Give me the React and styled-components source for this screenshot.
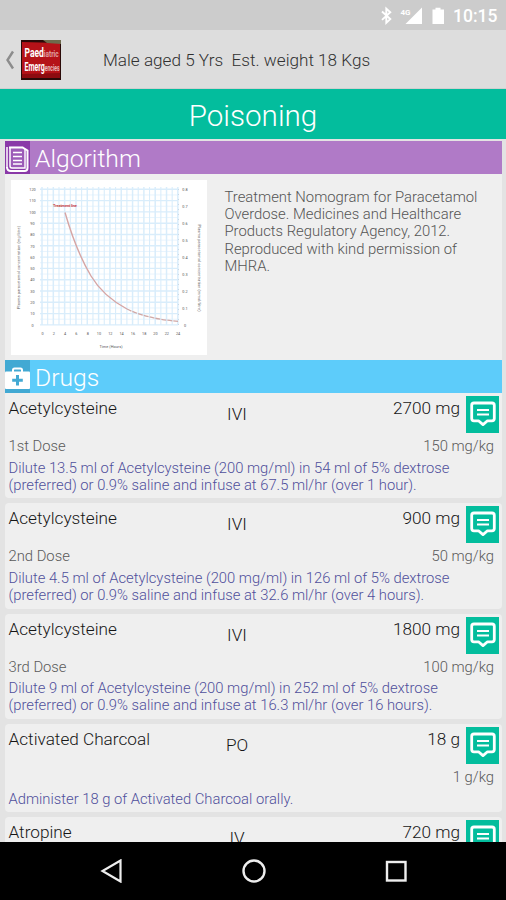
import React from 'react';
import styled, { createGlobalStyle } from 'styled-components';

const GlobalStyle = createGlobalStyle`
  * { box-sizing: border-box; }
  html, body { margin: 0; padding: 0; overflow: hidden; }
  body { font-family: Roboto, sans-serif; }
  svg { display: block; flex: none; }
`;

const Screen = styled.div`
  width: 506px;
  height: 900px;
  display: flex;
  flex-direction: column;
  overflow: hidden;
  background: #e3e3e3;
`;

const StatusBar = styled.div`
  height: 30px;
  flex: none;
  display: flex;
  align-items: center;
  padding-left: 380px;
  padding-top: 2px;
  background: #cccccc;
  color: #fff;
`;

const Clock = styled.span`
  margin-left: 8px;
  font-size: 17.5px;
  font-weight: 500;
`;

const ActionBar = styled.div`
  height: 59px;
  flex: none;
  display: flex;
  align-items: center;
  padding: 2px 0 0 5px;
  background: #dddddd;
  border-bottom: 1px solid #cfcfcf;
`;

const Patient = styled.div`
  margin-left: 42px;
  font-size: 17.15px;
  font-weight: 350;
  color: #303030;
  white-space: pre;
`;

const Banner = styled.div`
  height: 50px;
  flex: none;
  line-height: 54px;
  text-align: center;
  background: #03bd9d;
  color: #fff;
  font-size: 29.6px;
  font-weight: 300;
`;

const Content = styled.div`
  flex: 1;
  min-height: 0;
  overflow: hidden;
  padding: 2px 4px 0 5px;
`;

const SectionHeader = styled.div`
  height: 33px;
  display: flex;
  align-items: center;
  background: ${(props) => props.color};
`;

const SectionTitle = styled.span`
  margin-left: 5px;
  padding-top: 3px;
  line-height: 32px;
  color: #fff;
  font-size: 24.7px;
  font-weight: 300;
`;

const AlgorithmCard = styled.div`
  height: 186px;
  display: flex;
  padding: 6px 0 0 6px;
  background: #efefef;
`;

const AlgorithmText = styled.p`
  width: 266px;
  margin: 9px 0 0 17.5px;
  font-size: 14.82px;
  font-weight: 300;
  line-height: 17.2px;
  color: #555;
`;

const DrugList = styled.div`
  display: flex;
  flex-direction: column;
  gap: 5px;
`;

const DrugCard = styled.div`
  height: ${(props) => props.height}px;
  flex: none;
  padding: 3px 3px 0 3.5px;
  background: #efefef;
  border-radius: ${(props) => (props.first ? '0 0 4px 4px' : '4px')};
`;

const DrugHead = styled.div`
  height: 38px;
  display: grid;
  grid-template-columns: 207.5px 42px 1fr 33px;
  color: #161616;
  font-size: 17.2px;
  font-weight: 350;
  line-height: 24px;
`;

const Route = styled.span`
  padding-top: 6px;
  text-align: center;
`;

const Amount = styled.span`
  padding-right: 6px;
  text-align: right;
`;

const NoteButton = styled.button`
  width: 33px;
  height: 37px;
  padding: 0;
  border: 0;
  background: #03bd9d;
`;

const DoseRow = styled.div`
  height: 25.5px;
  display: flex;
  justify-content: space-between;
  padding-right: 5px;
  font-size: 14.8px;
  font-weight: 300;
  line-height: 25px;
  color: #5a5a5a;
`;

const Note = styled.div`
  font-size: 14.78px;
  font-weight: 300;
  line-height: 17.2px;
  color: #50509c;
  white-space: pre-line;
`;

const NavBar = styled.div`
  height: 58px;
  flex: none;
  display: flex;
  justify-content: space-between;
  align-items: center;
  padding: 0 98px 0 100px;
  background: #000;
`;

const drugs = [
  {
    name: 'Acetylcysteine', route: 'IVI', amount: '2700 mg', dose: '1st Dose', perKg: '150 mg/kg', height: 105.4,
    note: 'Dilute 13.5 ml of Acetylcysteine (200 mg/ml) in 54 ml of 5% dextrose\n(preferred) or 0.9% saline and infuse at 67.5 ml/hr (over 1 hour).',
  },
  {
    name: 'Acetylcysteine', route: 'IVI', amount: '900 mg', dose: '2nd Dose', perKg: '50 mg/kg', height: 105.4,
    note: 'Dilute 4.5 ml of Acetylcysteine (200 mg/ml) in 126 ml of 5% dextrose\n(preferred) or 0.9% saline and infuse at 32.6 ml/hr (over 4 hours).',
  },
  {
    name: 'Acetylcysteine', route: 'IVI', amount: '1800 mg', dose: '3rd Dose', perKg: '100 mg/kg', height: 105.4,
    note: 'Dilute 9 ml of Acetylcysteine (200 mg/ml) in 252 ml of 5% dextrose\n(preferred) or 0.9% saline and infuse at 16.3 ml/hr (over 16 hours).',
  },
  {
    name: 'Activated Charcoal', route: 'PO', amount: '18 g', dose: '', perKg: '1 g/kg', height: 88,
    note: 'Administer 18 g of Activated Charcoal orally.',
  },
  {
    name: 'Atropine', route: 'IV', amount: '720 mg', dose: '', perKg: '', height: 88, note: '',
  },
];

const range = (n) => Array.from({ length: n }, (_, i) => i);

const StatusIcons = () => (
  <svg width="65" height="20" viewBox="0 0 65 20">
    <path d="M2 5.5l8.3 7.6-4 3.7V2.6l4 3.7L2 13.9" fill="none" stroke="#fff" strokeWidth="1.9" />
    <path d="M42 1.500V18H25.500l8-8z" fill="#fff" />
    <text x="20.500" y="8.500" fontSize="8" fontWeight="700" fill="#fff">4G</text>
    <path d="M55.500 3.500v-1.800h5v1.800h3.500V18H52.500V3.500z" fill="#fff" />
  </svg>
);

const Logo = () => (
  <svg width="40" height="40" viewBox="0 0 40 40">
    <rect width="40" height="40" fill="#2a0a08" />
    <path d="M1 2l38 1v35H1z" fill="#b51218" />
    <path d="M22 0h18v4L26 3z" fill="#6e6a4c" />
    <path d="M1 34l38-1v5H1z" fill="#8d0b10" />
    <g fill="#fff" fontWeight="700" fontSize="12.500">
      <text transform="translate(3.500 16.500) scale(0.68 1)">
        Paed<tspan fontSize="9.500" fillOpacity="0.6">iatric</tspan>
      </text>
      <text transform="translate(3.500 31) scale(0.56 1)">
        Emerg<tspan fontSize="9" fillOpacity="0.7">encies</tspan>
      </text>
    </g>
  </svg>
);

const DocumentIcon = () => (
  <svg width="25" height="33" viewBox="0 0 25 33">
    <rect width="25" height="33" fill="#8a39a8" />
    <path d="M5 5.500h14v22H5z" fill="#9c5bb8" />
    <path d="M4 6.500h13.500l5 3V27q0 3-3 3H6q-4 0-4-4" fill="none" stroke="#fff" strokeWidth="2" />
    <path d="M5 6v19q0 2 2 2h13V8" fill="none" stroke="#fff" strokeWidth="1.500" />
    <path d="M2 6v21" stroke="#fff" strokeWidth="1.500" />
    <path d="M8 11.500h9M8 15.500h9M8 19.500h9M8 23h9" stroke="#fff" strokeWidth="1.600" />
  </svg>
);

const MedkitIcon = () => (
  <svg width="25" height="33" viewBox="0 0 25 33">
    <rect width="25" height="33" fill="#42a9d3" />
    <path d="M8 12V10q0-1.500 1.500-1.500h6Q17 8.500 17 10v2" fill="none" stroke="#fff" strokeWidth="2" />
    <rect y="11.500" width="25" height="17.500" rx="1" fill="#fff" />
    <path d="M12.500 15v10.500M7.200 20.200h10.600" stroke="#42a9d3" strokeWidth="3" />
  </svg>
);

const CommentIcon = () => (
  <svg width="33" height="37" viewBox="0 0 33 37">
    <path d="M8 7h18q2.300 0 2.300 2.300v13.200q0 2.300-2.300 2.300h-4.500L17 28.600l-4.500-3.800H8q-2.300 0-2.300-2.300V9.300Q5.700 7 8 7z" fill="none" stroke="#fff" strokeWidth="2.800" strokeLinejoin="round" />
    <path d="M11 14h12M11 18.500h12" stroke="#fff" strokeWidth="2" />
  </svg>
);

const Nomogram = () => (
  <svg width="196" height="175" viewBox="0 0 196 175">
    <rect width="196" height="175" fill="#fff" />
    {range(25).map((i) => (
      <path key={i} d={`M${31 + i * 5.66} 7v138`} stroke="#d9edfb" strokeWidth={i % 2 ? 1.1 : 1.5} />
    ))}
    {range(25).map((i) => (
      <path key={i} d={`M29 ${9.3 + i * 5.65}h138`} stroke="#d9edfb" strokeWidth={i % 2 ? 0.6 : 1.4} />
    ))}
    <path d="M54 32.500C62 60 71 81 80 96S101 121 116 129" fill="none" stroke="#d6a5a4" strokeWidth="1.400" />
    <path d="M116 129C130 136 149 140 167 141.300" fill="none" stroke="#d0a8a6" strokeWidth="1.300" strokeDasharray="5 1" />
    <text x="42" y="26.500" fontSize="4" fontWeight="700" fill="#c64240" textLength="24">Treatment line</text>
    <g fontSize="3.800" fill="#555" textAnchor="middle">
      {range(13).map((i) => (
        <text key={i} x={31.5 + i * 11.3} y="155">{i * 2}</text>
      ))}
      {range(13).map((i) => (
        <text key={i} x="21.500" y={11 + i * 11.3}>{120 - i * 10}</text>
      ))}
      {range(9).map((i) => (
        <text key={i} x="174" y={11 + i * 16.95}>{i === 8 ? '0' : `0.${8 - i}`}</text>
      ))}
      <text x="100" y="167.500" textLength="23">Time (Hours)</text>
      <text transform="translate(9 87.500) rotate(-90)" textLength="83">Plasma paracetamol concentration (mg/litre)</text>
      <text transform="translate(186.500 88) rotate(90)" textLength="87">Plasma paracetamol concentration (mmol/litre)</text>
    </g>
    <path d="M167.500 9v136" stroke="#bcd" strokeWidth="0.700" strokeDasharray="1 4" />
  </svg>
);

const App = () => (
  <Screen>
    <GlobalStyle />
    <StatusBar>
      <StatusIcons />
      <Clock>10:15</Clock>
    </StatusBar>
    <ActionBar>
      <svg width="16" height="20" viewBox="0 0 16 20">
        <path d="M8 1.500L2.500 10 8 18.500" fill="none" stroke="#8c8c8c" strokeWidth="2.400" />
      </svg>
      <Logo />
      <Patient>Male aged 5 Yrs  Est. weight 18 Kgs</Patient>
    </ActionBar>
    <Banner>Poisoning</Banner>
    <Content>
      <SectionHeader color="#b07ac7">
        <DocumentIcon />
        <SectionTitle>Algorithm</SectionTitle>
      </SectionHeader>
      <AlgorithmCard>
        <Nomogram />
        <AlgorithmText>
          Treatment Nomogram for Paracetamol Overdose. Medicines and Healthcare Products Regulatory Agency, 2012. Reproduced with kind permission of MHRA.
        </AlgorithmText>
      </AlgorithmCard>
      <SectionHeader color="#5dccfa">
        <MedkitIcon />
        <SectionTitle>Drugs</SectionTitle>
      </SectionHeader>
      <DrugList>
        {drugs.map((drug, i) => (
          <DrugCard key={i} height={drug.height} first={i === 0}>
            <DrugHead>
              <span>{drug.name}</span>
              <Route>{drug.route}</Route>
              <Amount>{drug.amount}</Amount>
              <NoteButton><CommentIcon /></NoteButton>
            </DrugHead>
            <DoseRow>
              <span>{drug.dose}</span>
              <span>{drug.perKg}</span>
            </DoseRow>
            <Note>{drug.note}</Note>
          </DrugCard>
        ))}
      </DrugList>
    </Content>
    <NavBar>
      <svg width="24" height="24" viewBox="0 0 24 24">
        <path d="M20.500 1.500v21L2.500 12z" fill="none" stroke="#eee" strokeWidth="2.200" />
      </svg>
      <svg width="26" height="26" viewBox="0 0 26 26">
        <circle cx="13" cy="13" r="10.500" fill="none" stroke="#eee" strokeWidth="2.400" />
      </svg>
      <svg width="24" height="24" viewBox="0 0 24 24">
        <rect x="3" y="3" width="18.500" height="18.500" fill="none" stroke="#eee" strokeWidth="2.400" />
      </svg>
    </NavBar>
  </Screen>
);

export default App;
